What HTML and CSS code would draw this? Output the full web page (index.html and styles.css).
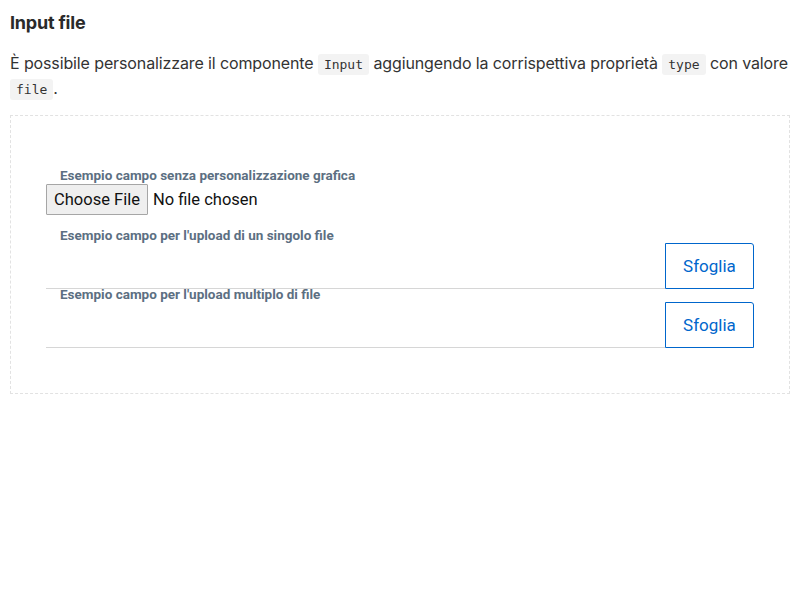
FILE: index.html
```html
<!DOCTYPE html>
<html lang="it">
<head>
<meta charset="utf-8">
<title>Input file</title>
<link rel="stylesheet" href="styles.css">
</head>
<body>
<main class="page">
  <h3 class="title">Input file</h3>
  <p class="intro">È possibile personalizzare il componente <code>Input</code> aggiungendo la corrispettiva proprietà <code>type</code> con valore <code>file</code>.</p>
  <section class="demo">
    <div class="field plain">
      <label class="label">Esempio campo senza personalizzazione grafica</label>
      <div class="native">
        <span class="native-btn">Choose File</span>
        <span class="native-text">No file chosen</span>
      </div>
    </div>
    <div class="field upload first">
      <label class="label">Esempio campo per l'upload di un singolo file</label>
      <div class="row">
        <span class="row-input"></span>
        <span class="browse">Sfoglia</span>
      </div>
    </div>
    <div class="field upload next">
      <label class="label">Esempio campo per l'upload multiplo di file</label>
      <div class="row">
        <span class="row-input"></span>
        <span class="browse">Sfoglia</span>
      </div>
    </div>
  </section>
</main>
</body>
</html>
```

FILE: styles.css
```css
* { box-sizing: border-box; }
html, body { margin: 0; padding: 0; background: #fff; }
body {
  font-family: Inter, "Liberation Sans", sans-serif;
  color: #2b2b2b;
}
.page { padding: 0 10px; }
.title {
  margin: 0;
  padding-top: 12px;
  font-size: 18px;
  line-height: 22px;
  font-weight: 700;
  color: #2a2a2a;
  letter-spacing: -0.2px;
}
.intro {
  margin: 17px 0 0;
  font-size: 16px;
  line-height: 25px;
  letter-spacing: -0.12px;
  color: #333;
}
.intro code {
  font-family: "DejaVu Sans Mono", monospace;
  font-size: 13px;
  line-height: 1;
  letter-spacing: 0;
  background: #f3f3f3;
  border-radius: 3px;
  padding: 3px 6px;
  color: #333;
}
.demo {
  margin-top: 14px;
  border: 1px dashed #e2e2e2;
  padding: 51px 35px 45px;
}
.label {
  display: block;
  padding-left: 14px;
  font-family: Roboto, "Open Sans", sans-serif;
  font-weight: 700;
  font-size: 13.5px;
  line-height: 16px;
  color: #5c6f82;
}
.native {
  display: flex;
  align-items: center;
  margin-top: 1px;
  font-family: Roboto, sans-serif;
  font-size: 16.5px;
  color: #111;
}
.native-btn {
  display: inline-flex;
  align-items: center;
  height: 31px;
  padding: 0 7px;
  background: #efefef;
  border: 1px solid #a6a6a6;
  border-radius: 1px;
}
.native-text { margin-left: 5px; }
.first { margin-top: 12px; }
.next { margin-top: -3px; }
.row {
  display: flex;
  align-items: stretch;
  height: 46px;
}
.row-input {
  flex: 1;
  border-bottom: 1px solid #d6d6d6;
}
.browse {
  width: 89px;
  display: flex;
  align-items: center;
  justify-content: center;
  border: 1px solid #0066cc;
  border-radius: 0 3px 0 0;
  font-family: Roboto, sans-serif;
  font-size: 17px;
  color: #0066cc;
}
```
